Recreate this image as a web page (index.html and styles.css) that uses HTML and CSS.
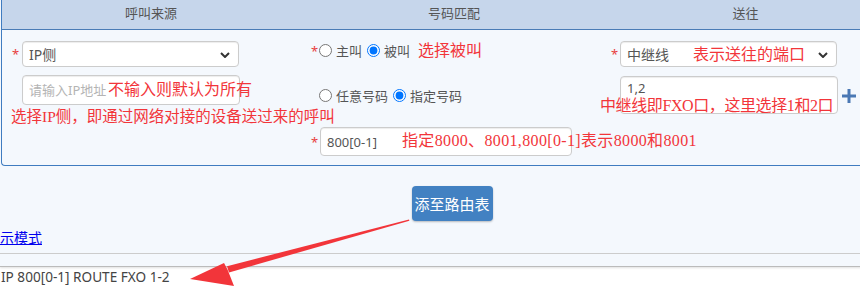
FILE: index.html
```html
<!DOCTYPE html>
<html lang="zh-CN">
<head>
    <meta charset="UTF-8">
    <meta name="viewport" content="width=device-width, initial-scale=1.0">
    <title>路由表</title>
    <link rel="stylesheet" href="styles.css">
</head>
<body>
    <div class="page">
        <div class="top">
            <div class="route-panel">
                <div class="route-head">
                    <div class="col col-src">呼叫来源</div>
                    <div class="col col-num">号码匹配</div>
                    <div class="col col-dst">送往</div>
                </div>
                <div class="route-body">
                    <!-- 呼叫来源 -->
                    <div class="col col-src">
                        <div class="field">
                            <span class="star">*</span>
                            <div class="select-box">
                                <select class="form-control">
                                    <option>IP侧</option>
                                </select>
                                <svg class="chevron" width="10" height="6" viewBox="0 0 10 6"><path d="M1 1 L5 5 L9 1" fill="none" stroke="#333" stroke-width="2"/></svg>
                            </div>
                        </div>
                        <div class="field field-ip">
                            <span class="star"></span>
                            <div class="input-box">
                                <input type="text" class="form-control" placeholder="请输入IP地址">
                                <span class="note note-ip">不输入则默认为所有</span>
                            </div>
                        </div>
                        <p class="note-line">选择IP侧，即通过网络对接的设备送过来的呼叫</p>
                    </div>

                    <!-- 号码匹配 -->
                    <div class="col col-num">
                        <div class="radio-row">
                            <span class="star">*</span>
                            <label><input type="radio" name="dir">主叫</label>
                            <label><input type="radio" name="dir" checked>被叫</label>
                            <span class="note-inline">选择被叫</span>
                        </div>
                        <div class="radio-row radio-row-2">
                            <span class="star"></span>
                            <label><input type="radio" name="match">任意号码</label>
                            <label><input type="radio" name="match" checked>指定号码</label>
                        </div>
                        <div class="field field-number">
                            <span class="star star-wide">*</span>
                            <div class="input-box">
                                <input type="text" class="form-control" value="800[0-1]">
                                <span class="note note-number">指定8000、8001,800[0-1]表示8000和8001</span>
                            </div>
                        </div>
                    </div>

                    <!-- 送往 -->
                    <div class="col col-dst">
                        <div class="field">
                            <span class="star">*</span>
                            <div class="select-box">
                                <select class="form-control">
                                    <option>中继线</option>
                                </select>
                                <span class="note note-port">表示送往的端口</span>
                                <svg class="chevron" width="10" height="6" viewBox="0 0 10 6"><path d="M1 1 L5 5 L9 1" fill="none" stroke="#333" stroke-width="2"/></svg>
                            </div>
                        </div>
                        <div class="field field-ports">
                            <span class="star"></span>
                            <textarea class="form-control">1,2</textarea>
                            <svg class="plus" width="14" height="14" viewBox="0 0 14 14"><rect x="5.5" y="0" width="3" height="14" fill="#4a78b4"/><rect x="0" y="5.5" width="14" height="3" fill="#4a78b4"/></svg>
                            <span class="note note-fxo">中继线即FXO口，这里选择1和2口</span>
                        </div>
                    </div>
                </div>
            </div>

            <div class="actions">
                <button type="button" class="btn-add">添至路由表</button>
            </div>
            <a href="#" class="mode-link">示模式</a>
            <div class="rule"></div>
        </div>

        <div class="output">IP 800[0-1] ROUTE FXO 1-2</div>

        <!-- 标注箭头 -->
        <svg class="arrow" width="860" height="293" viewBox="0 0 860 293">
            <polygon points="409,219.4 409.4,220.8 229,272.4 227,266.2" fill="#f2353a"/>
            <polygon points="190,279 224,263 227.5,269.5 234,286" fill="#f2353a"/>
        </svg>
    </div>
</body>
</html>
```

FILE: styles.css
```css
body {
    margin: 0;
    overflow: hidden;
    font-family: "Noto Sans", "Noto Sans CJK SC", sans-serif;
    font-size: 13px;
    color: #555;
    background-color: #fff;
}
.page {
    position: relative;
    width: 903px;
}
.top {
    background-color: #f4f8fd;
    padding-bottom: 12px;
    border-bottom: 1px solid #bbb;
    box-shadow: 0 1px 2px rgba(0, 0, 0, 0.12);
}
.route-panel {
    margin-left: 1px;
    border-left: 1px solid #3f7cc0;
    border-bottom: 1px solid #3f7cc0;
    border-bottom-left-radius: 4px;
}
.route-head,
.route-body {
    display: grid;
    grid-template-columns: 300px 295px 306px;
}
.route-head {
    height: 29px;
    line-height: 27px;
    background-color: #c6d6eb;
    border-bottom: 1px solid #4a7cb6;
}
.route-head .col {
    text-align: center;
    padding: 0;
}
.route-head .col-src { padding-right: 2px; }
.route-head .col-num { padding-left: 9px; }
.route-head .col-dst { padding-right: 9px; }
.route-body {
    padding: 11px 0 9px;
}
.col-src { padding-left: 10px; }
.col-num { padding-left: 9px; }
.col-dst { padding-left: 14px; }

.star {
    display: inline-block;
    width: 10px;
    flex-shrink: 0;
    color: #e8403d;
    font-size: 13px;
}
.col-num .star { width: 8px; }
.col-num .star-wide { width: 9px; }
.col-dst .star { width: 9px; }

.field {
    display: flex;
    align-items: center;
    position: relative;
}
.form-control {
    box-sizing: border-box;
    width: 217px;
    height: 26px;
    padding: 0 6px;
    font-family: "Noto Sans", "Noto Sans CJK SC", sans-serif;
    font-size: 13px;
    color: #555;
    background-color: #fff;
    border: 1px solid #ccc;
    border-radius: 4px;
    box-shadow: inset 0 1px 1px rgba(0, 0, 0, 0.075);
    outline: none;
}
select.form-control {
    appearance: none;
    -webkit-appearance: none;
    font-size: 14px;
}
.form-control::placeholder {
    color: #b4b4b4;
}
.select-box,
.input-box {
    position: relative;
}
.chevron {
    position: absolute;
    right: 9px;
    top: 11px;
}
.field-ip {
    margin-top: 8px;
}
.field-ip .form-control {
    width: 218px;
    height: 30px;
}

/* 红色标注 */
.note,
.note-line,
.note-inline {
    font-family: "Liberation Serif", "Noto Sans CJK SC", serif;
    font-size: 16px;
    color: #f2353a;
    white-space: nowrap;
    line-height: 18px;
}
.note {
    position: absolute;
}
.note-ip {
    left: 86px;
    top: 6px;
}
.note-line {
    margin: 3px 0 0 -1px;
    font-size: 15.5px;
}
.note-inline {
    margin-left: 3px;
}
.note-number {
    left: 82px;
    top: 5px;
    letter-spacing: 0.35px;
}
.note-port {
    left: 73px;
    top: 5px;
}
.note-fxo {
    left: -11px;
    top: 21px;
}

.radio-row {
    display: flex;
    align-items: center;
    height: 19px;
}
.radio-row label {
    display: flex;
    align-items: center;
    margin-right: 5px;
}
.radio-row input {
    width: 13px;
    height: 13px;
    margin: 0 4px 0 0;
}
.radio-row-2 {
    margin-top: 26px;
}
.field-number {
    margin-top: 22px;
}
.field-number .form-control {
    width: 252px;
    height: 29px;
}

.field-ports {
    margin-top: 9px;
    align-items: flex-start;
}
.field-ports textarea {
    width: 218px;
    height: 38px;
    padding: 2px 6px;
    resize: none;
    line-height: 18px;
}
.plus {
    margin: 13px 0 0 4px;
}
.field-ports .note {
    left: -11px;
    letter-spacing: -0.4px;
}

.actions {
    padding-top: 20px;
    text-align: center;
}
.btn-add {
    width: 81px;
    height: 35px;
    margin-left: 1px;
    padding: 0;
    font-family: "Noto Sans CJK SC", sans-serif;
    font-size: 15px;
    color: #fff;
    background-color: #4281c2;
    border: none;
    border-radius: 4px;
    box-shadow: 0 1px 2px rgba(0, 0, 0, 0.25);
}
.mode-link {
    display: block;
    width: max-content;
    margin-top: 7px;
    font-size: 14px;
    line-height: 20px;
    color: #0000ee;
}
.rule {
    margin-top: 5px;
    border-top: 1px solid #ccc;
}
.output {
    padding-left: 1px;
    font-size: 13.6px;
    line-height: 20px;
    color: #444;
}
.arrow {
    position: absolute;
    left: 0;
    top: 0;
    pointer-events: none;
}
```
